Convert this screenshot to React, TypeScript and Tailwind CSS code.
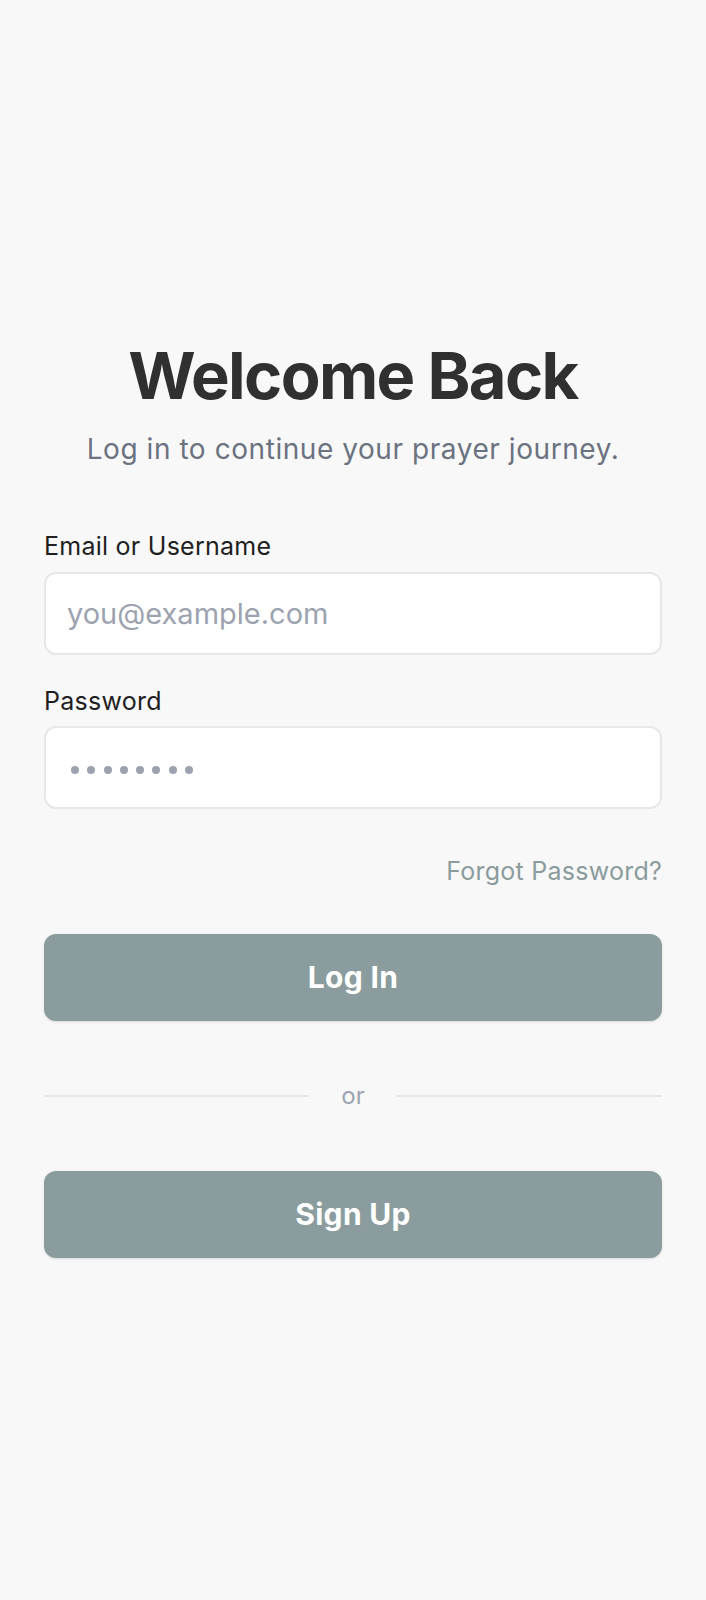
import React from "react";

export default function App() {
  const dots = [0, 1, 2, 3, 4, 5, 6, 7];
  return (
    <div
      className="min-h-screen w-full bg-[#f8f8f8] flex flex-col justify-center px-11"
      style={{ fontFamily: "Inter, 'Noto Sans', sans-serif" }}
    >
      <div className="flex flex-col items-center">
        <h1 className="text-[65px] font-bold leading-[68px] tracking-tight text-[#303030]">
          Welcome Back
        </h1>
        <p className="mt-[18px] text-[28px] tracking-[0.02em] text-[#6b7280]">
          Log in to continue your prayer journey.
        </p>
      </div>

      <div className="mt-[58px] flex flex-col">
        <label className="text-[25px] tracking-[0.01em] text-[#1f1f1f]">Email or Username</label>
        <div className="mt-1.5 h-[83px] rounded-xl border-2 border-[#e5e7eb] bg-white flex items-center pl-[21px] pr-6">
          <span className="text-[29px] text-[#9ca3af]">you@example.com</span>
        </div>

        <label className="mt-[28px] text-[25px] tracking-[0.01em] text-[#1f1f1f]">Password</label>
        <div className="mt-1.5 h-[83px] rounded-xl border-2 border-[#e5e7eb] bg-white flex items-center pl-[25px] pr-6">
          <div className="mt-1 flex items-center gap-[8.3px]">
            {dots.map((d) => (
              <span key={d} className="block w-[8px] h-[8px] rounded-full bg-[#9ca3af]" />
            ))}
          </div>
        </div>

        <div className="mt-[44px] flex justify-end">
          <span className="text-[25px] tracking-[0.01em] text-[#8a9c9d]">Forgot Password?</span>
        </div>

        <button className="mt-[43px] h-[87px] rounded-xl bg-[#8a9c9d] text-white text-[30px] font-bold tracking-[0.01em] shadow-sm">
          Log In
        </button>

        <div className="mt-[57px] flex items-center gap-8">
          <div className="flex-1 h-[2px] bg-[#e5e7eb]" />
          <span className="text-[24px] text-[#9ca3af]">or</span>
          <div className="flex-1 h-[2px] bg-[#e5e7eb]" />
        </div>

        <button className="mt-[57px] h-[87px] rounded-xl bg-[#8a9c9d] text-white text-[30px] font-bold tracking-[0.01em] shadow-sm">
          Sign Up
        </button>
      </div>
    </div>
  );
}
